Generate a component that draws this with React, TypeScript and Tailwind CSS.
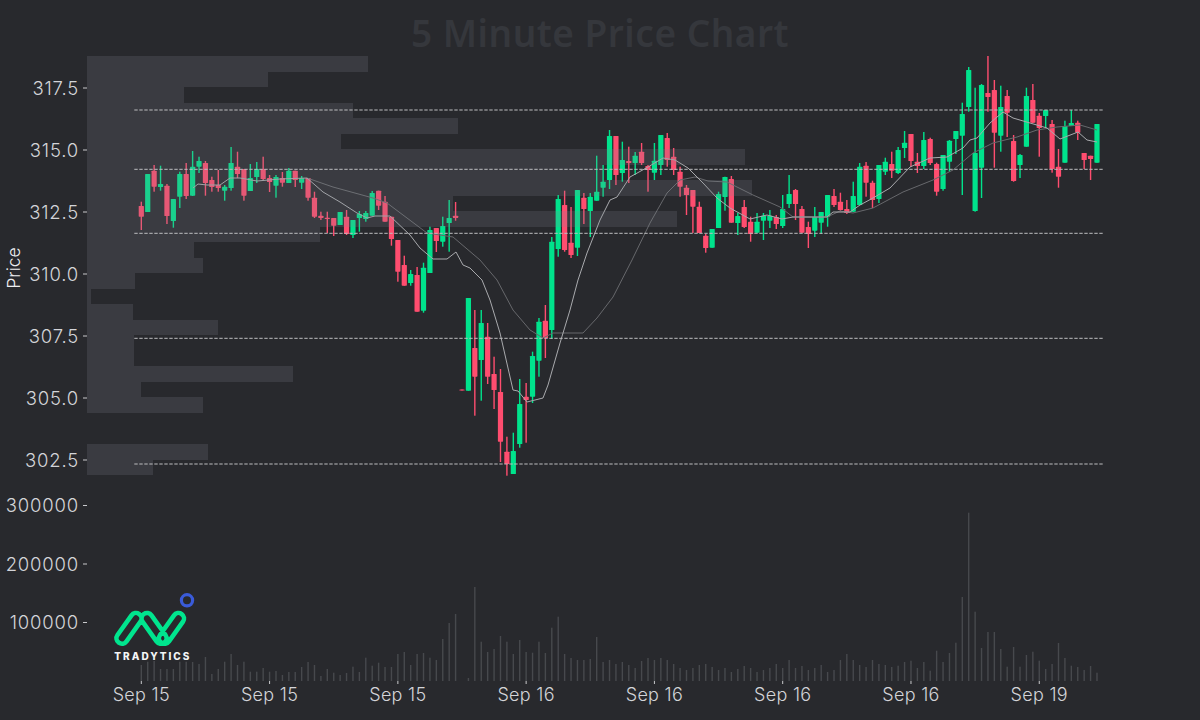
// 5 minute price chart, pixel coords come straight from the screenshot
type Candle = [number, number, number, number, number];

// wick top, body top, body bottom, wick bottom, 1 = up
const candles: Candle[] = [
  [201.7,206,216.7,230,0],[174,174,212,212,1],[165,170.7,186.7,191.7,0],[165.7,184,187,190.7,1],[184,185.7,216,224,0],
  [199,199,221,227.7,1],[171.7,174,196.7,208,1],[163,174,196,199,0],[151,166.7,195.7,196,1],[156.7,161,166.7,173,1],
  [161,163,183,195.7,0],[176.7,180,187,191.7,0],[170,185,188,191.7,0],[185,186.7,190.7,200.7,1],[147,163,188,190.7,1],
  [151.7,166.7,174,178,0],[169,169,195.7,200.7,0],[164,178,191,191,1],[162,169,177,183,1],[156.7,169,179,180,0],
  [175,178,182,192,0],[175,177,185.7,197.7,1],[172,178,182.7,186.7,0],[168,170.7,183,183,1],[170.7,170.7,180,187,0],
  [176,178,182.7,189,1],[178,178,197.7,200.7,0],[191.7,197.7,216.7,218,0],[211.7,215.7,218,220,0],[211.7,217.7,219,233,0],
  [218,218,225.7,236,0],[212,212,225,225,1],[210,216.7,234,235,0],[220,220,235,238,1],[211,214,218,231.7,1],
  [211,213,219,221.7,1],[191,193,215.7,215.7,1],[190.7,190.7,205.7,210,0],[196,201.7,221.7,221.7,0],[216.7,216.7,239,245.7,0],
  [240,240,271.7,281.7,0],[255.7,265,285.7,285.7,0],[270,274,283,285.7,1],[267,275,311.7,311.7,0],[262.7,267.7,310.7,312.7,1],
  [226.7,230,273,273,1],[228,228,241,252,0],[216.7,226,241.7,246.7,1],[200,218,223,251.7,1],[202,215.7,218,220.7,0],
  [389.5,389.5,390.5,390.5,0],[298,298,390.7,390.7,1],[310,348,376.7,415.7,0],[310,323,360,400.7,1],[323,336.7,376.7,384,0],
  [356.7,374,390,409,0],[369,392,441.7,462,0],[436.7,451.7,464,475.7,0],[432.7,451,474,474,1],[379,404,444,447.7,1],
  [383,396.7,400,442.7,0],[351.7,356,396.7,403,1],[318,321.7,360.7,376.7,1],[305,320.7,338,358,0],[237,241.7,330,339,1],
  [195,199,249,256.7,1],[190.7,205,250,251.7,0],[207,242.7,255,258,0],[190,190,247.7,256,1],[193,197.7,209,224,0],
  [193,196.7,211,237,1],[155.7,191.7,200.7,200.7,1],[165,181.7,187.7,196.7,1],[130,136,180,189,1],[136,136,175,185,0],
  [141.7,160,173,181.7,1],[146.7,161,163,183,0],[152,155.7,163,175,1],[143,151.7,163,165,0],[165,166,170,191.7,0],
  [143,160.7,172.7,180,1],[135,135,165,175,1],[133,138,160,166.7,0],[148,156.7,170,175,0],[166.7,171.7,186.7,196.7,0],
  [185,187.7,195,215,0],[190,190,206.7,233,0],[201.7,206.7,233,233,0],[234,235.7,248,252.7,0],[229,229,247.7,247.7,1],
  [191.7,194,228,228,1],[176.7,177,197,210.7,1],[176,179,222.7,222.7,0],[213,216,223,235,1],[200,207,227,228,0],
  [216.7,221.7,234,241.7,0],[213,221.7,232.7,233,1],[213,215.7,220.7,240,1],[210,215.7,220.7,228,1],[215,217,224,229,0],
  [195,209,226,228,1],[175,194,204,208,1],[189,190,204,220,0],[206,209,232.7,233,0],[221.7,227,234,248,0],
  [207,217,230.7,237,1],[212,212,222.7,234,1],[195,195,216.7,226.7,1],[189,196,205,207,0],[192.7,201.7,210,210.7,0],
  [200,209,213,214,0],[181.7,196,211.7,212,1],[163,166.7,205,205,1],[162,165.7,182.7,196.7,0],[180.7,182.7,200,208,0],
  [165,165,199,203,1],[157.7,161.7,171.7,175,1],[151.7,164,170.7,178,0],[147,150,173,174,1],[131,142.7,148,158,1],
  [134,134,161,167,0],[153,161.7,166,173,0],[132,140,166,169,1],[137.7,139,163,165,0],[162.7,164,191.7,195.7,0],
  [155,155,189,190.7,1],[140,140.7,161.7,171.7,1],[131,131,139,154,1],[102.7,114,135.7,195,1],[67,70,107,111.7,1],
  [87.7,153,211,211.7,1],[84,85,167.7,198,1],[56,93,97,111.7,0],[80,90,132.7,167.7,0],[85.7,107,135.7,151.7,1],
  [90,96,112.7,137,0],[135,141,181,181.7,0],[154,155,165,178,1],[87.7,96,146.7,146.7,1],[84,100,122.7,123,0],
  [113,115.7,128,156.7,0],[110,110,116,128,1],[120,124,169,172.7,0],[149,166.7,176.7,187.7,0],[120.7,126,162.7,162.7,1],
  [110,123,126,126,1],[120.7,122.7,132.7,140,0],[153,153,160,169,0],[155.7,155.7,159,180,0],[124,124,162.7,162.7,1],
];

// top of each volume bar, base is y=681
const volume = [
  665,661.7,661,669,669,669,661.7,661.7,662,664,657,674,669,661.7,654,665,661.7,671.7,671.7,668,671.7,671,675,672,672,
  667,662,665,676,669,672.7,675,673,666.7,672,657.7,665.7,662.7,667,667,654,652,665,654,653,657.7,660,639,623,614,
  681,678,587,641.7,652,649,636,641.7,654,640,652,652.7,641.7,653,627.7,616.7,654,658,660,660,659,637,
  662,660,664,662,665,668,661,658,660,658,660,664,668,670,668,665,664,667,670,668,672,669,666,668,672,670,668,664,668,660,668,666,670,668,665,672,670,660,654,660,665,667,660,664,
  665,667,665.7,662,660.7,668,662,670.7,650.7,662,653,642.7,597,512.7,611.7,648,632,632,649,666.7,647,666.7,655,651.7,660.7,669,664,643,658,665.7,667,670,666,672.7,
];

// right edge of each volume-profile row, rows are 15.52px tall from y=56
const profile = [
  367.7,267.7,184,353,458,341,745,603,751.7,453,676.7,320,194,203,135,90.7,132.7,218.3,134,134,293,141,203,0,0,208,153,
];

const fastLine = "193,188 198,184 207,185 220,185 230,178 240,178 257,181 280,179 307,178 323,192 340,202 357,213 367,218 375,216 390,216 410,235 420,248 433,259 447,259 456,252 463,265 470,268 482,280 490,300 500,333 513,390 518,391 527,402 543,398 548,385 560,343 570,310 578,280 587,253 600,220 610,200 617,197 630,177 648,167 663,158 675,160 688,168 703,183 717,198 730,208 750,219 767,215 782,219 793,217 827,217 833,212 850,212 860,205 873,198 890,188 910,167 930,158 947,157 963,148 970,140 977,138 990,123 1003,112 1013,118 1030,123 1047,128 1060,139 1078,132 1087,140 1097,142";
const slowLine = "307,178 333,187 373,198 387,203 427,233 453,237 480,260 497,280 513,310 530,330 543,338 553,333 583,333 597,318 613,297 632,260 650,223 667,193 680,180 695,177 708,181 727,182 753,195 780,207 793,217 827,217 840,211 853,213 873,208 903,192 933,180 953,170 973,153 993,143 1017,137 1037,130 1057,127 1080,125 1097,130";

const priceTicks = [
  ["317.5", 88], ["315.0", 150], ["312.5", 212], ["310.0", 274], ["307.5", 336], ["305.0", 398], ["302.5", 460],
  ["300000", 505.5], ["200000", 564], ["100000", 622.5],
] as const;
const dateTicks = ["Sep 15", "Sep 15", "Sep 15", "Sep 16", "Sep 16", "Sep 16", "Sep 16", "Sep 19"];
const levels = [110, 169.3, 233.3, 338.3, 464];

const candleX = (i: number) => 141.3 + 6.414 * i;

function Logo() {
  return (
    <g>
      {/* three slanted loops: left, middle, right */}
      <path
        d="M117.5 635L131.5 615.3A5.5 5.5 0 0 1 140.5 621.7L126.5 641.4A5.5 5.5 0 0 1 117.5 635ZM151.5 615.3L165.5 635A5.5 5.5 0 0 1 156.5 641.4L142.5 621.7A5.5 5.5 0 0 1 151.5 615.3ZM160 635L174 615.3A5.5 5.5 0 0 1 183 621.7L169 641.4A5.5 5.5 0 0 1 160 635Z"
        fill="none"
        stroke="#00e58e"
        strokeWidth={4.6}
        strokeLinejoin="round"
      />
      <circle cx={187} cy={600.3} r={5.6} fill="none" stroke="#3a5bd9" strokeWidth={3.2} />
      <text x={114.3} y={660} fill="#f4f5f6" fontSize={10} fontWeight={800} letterSpacing={2} fontFamily="Inter, sans-serif">
        TRADYTICS
      </text>
    </g>
  );
}

export default function App() {
  return (
    <div className="flex h-[720px] w-[1200px] flex-col overflow-hidden bg-[#28292d]">
      <h1 className="flex h-[60px] items-center justify-center pt-[6px] font-['Noto_Sans',sans-serif] text-[37px] font-semibold tracking-[0.5px] text-[#35373c]">
        5 Minute Price Chart
      </h1>
      <svg viewBox="0 60 1200 660" className="h-[660px] w-[1200px] overflow-visible" fontFamily="Inter, sans-serif">
        {/* volume */}
        {volume.map((top, i) => (
          <rect key={i} x={candleX(i) - 0.7} y={top} width={1.4} height={681 - top} fill="#47494d" />
        ))}

        {/* candles */}
        {candles.map(([wt, bt, bb, wb, up], i) => {
          const x = candleX(i);
          const color = up ? "#00e38c" : "#ff4d6f";
          return (
            <g key={i} fill={color}>
              <rect x={x - 0.7} y={wt} width={1.4} height={wb - wt} />
              <rect x={x - 2.6} y={bt} width={5.2} height={Math.max(bb - bt, 1)} rx={0.6} />
            </g>
          );
        })}

        <polyline points={slowLine} fill="none" stroke="#67686c" strokeWidth={1} strokeLinejoin="round" />
        <polyline points={fastLine} fill="none" stroke="#a9aaad" strokeWidth={1} strokeLinejoin="round" />

        {/* volume profile, sits over the candles and dulls them */}
        {profile.map((right, i) =>
          right > 0 ? (
            <rect key={i} x={86.7} y={56 + i * 15.52} width={right - 86.7} height={15.52} fill="#82888f" fillOpacity={0.2} shapeRendering="crispEdges" />
          ) : null,
        )}

        {levels.map((y) => (
          <line key={y} x1={134.3} x2={1103} y1={y} y2={y} stroke="#bdbec0" strokeWidth={1} strokeDasharray="3.4 1.6" />
        ))}

        {/* axes */}
        {priceTicks.map(([label, y]) => (
          <g key={label}>
            <line x1={83} x2={87} y1={y} y2={y} stroke="#c9cacc" strokeWidth={1} />
            <text x={79} y={y + 6.6} textAnchor="end" fill="#d3d4d8" fontSize={18.5} fontWeight={300} letterSpacing={0.8}>
              {label}
            </text>
          </g>
        ))}
        {dateTicks.map((label, i) => (
          <g key={i}>
            <line x1={141.3 + 128.28 * i} x2={141.3 + 128.28 * i} y1={681} y2={684} stroke="#c9cacc" strokeWidth={1} />
            <text x={141.3 + 128.28 * i} y={701} textAnchor="middle" fill="#d3d4d8" fontSize={18} fontWeight={300} letterSpacing={0.3}>
              {label}
            </text>
          </g>
        ))}
        <text transform="translate(20 268) rotate(-90)" textAnchor="middle" fill="#eeeef0" fontSize={17.5} fontWeight={300}>
          Price
        </text>

        <Logo />
      </svg>
    </div>
  );
}
